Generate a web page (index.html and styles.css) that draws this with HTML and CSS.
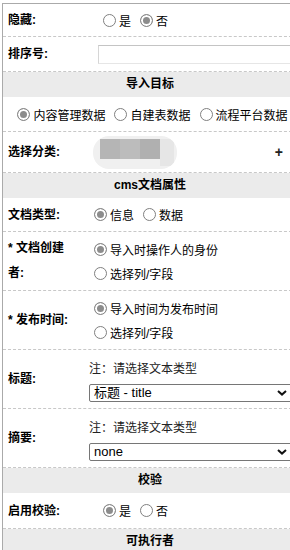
FILE: index.html
```html
<!DOCTYPE html>
<html lang="zh">
<head>
<meta charset="utf-8">
<title>表单</title>
<link rel="stylesheet" href="styles.css">
</head>
<body>
<div class="form">
  <div class="row r32">
    <div class="label">隐藏:</div>
    <div class="value indent radios">
      <label class="opt"><input class="radio" type="radio" name="hide">是</label>
      <label class="opt"><input class="radio" type="radio" name="hide" checked>否</label>
    </div>
  </div>
  <div class="row r34">
    <div class="label">排序号:</div>
    <div class="value indent"><input class="text" type="text"></div>
  </div>
  <div class="head">导入目标</div>
  <div class="row r34 center">
    <div class="radios">
      <label class="opt"><input class="radio" type="radio" name="target" checked>内容管理数据</label>
      <label class="opt"><input class="radio" type="radio" name="target">自建表数据</label>
      <label class="opt"><input class="radio" type="radio" name="target">流程平台数据</label>
    </div>
  </div>
  <div class="row r40">
    <div class="label">选择分类:</div>
    <div class="value between">
      <div class="blur"><span class="b1"></span><span class="b2"></span><span class="b3"></span><span class="b4"></span></div>
      <span class="plus">+</span>
    </div>
  </div>
  <div class="head">cms文档属性</div>
  <div class="row r33">
    <div class="label">文档类型:</div>
    <div class="value radios">
      <label class="opt"><input class="radio" type="radio" name="type" checked>信息</label>
      <label class="opt"><input class="radio" type="radio" name="type">数据</label>
    </div>
  </div>
  <div class="row r58">
    <div class="label tall">* 文档创建者:</div>
    <div class="value stack">
      <label class="opt"><input class="radio" type="radio" name="creator" checked>导入时操作人的身份</label>
      <label class="opt"><input class="radio" type="radio" name="creator">选择列/字段</label>
    </div>
  </div>
  <div class="row r58">
    <div class="label">* 发布时间:</div>
    <div class="value stack">
      <label class="opt"><input class="radio" type="radio" name="time" checked>导入时间为发布时间</label>
      <label class="opt"><input class="radio" type="radio" name="time">选择列/字段</label>
    </div>
  </div>
  <div class="row r58">
    <div class="label">标题:</div>
    <div class="value col">
      <div class="note">注：请选择文本类型</div>
      <div class="selwrap">
        <select class="sel"><option>标题 - title</option></select>
        <svg class="chev" width="10" height="6" viewBox="0 0 10 6"><path d="M1 1 L5 4.6 L9 1" fill="none" stroke="#111" stroke-width="2"/></svg>
      </div>
    </div>
  </div>
  <div class="row r58">
    <div class="label">摘要:</div>
    <div class="value col">
      <div class="note">注：请选择文本类型</div>
      <div class="selwrap">
        <select class="sel"><option>none</option></select>
        <svg class="chev" width="10" height="6" viewBox="0 0 10 6"><path d="M1 1 L5 4.6 L9 1" fill="none" stroke="#111" stroke-width="2"/></svg>
      </div>
    </div>
  </div>
  <div class="head">校验</div>
  <div class="row r35">
    <div class="label">启用校验:</div>
    <div class="value indent radios">
      <label class="opt"><input class="radio" type="radio" name="check" checked>是</label>
      <label class="opt"><input class="radio" type="radio" name="check">否</label>
    </div>
  </div>
  <div class="head">可执行者</div>
</div>
</body>
</html>
```
FILE: styles.css
```css
html, body {
  margin: 0;
  padding: 0;
  overflow: hidden;
  background: #fff;
}
body {
  font-family: "Liberation Sans", "Noto Sans CJK SC", sans-serif;
  font-size: 12px;
  color: #000;
}
.form {
  margin: 3px 0 0 2px;
  width: 294px;
  border-top: 1px solid #aaa;
  border-left: 1px solid #aaa;
}
.row {
  display: flex;
  align-items: center;
  border-bottom: 1px dashed #c8c8c8;
  box-sizing: content-box;
}
.r32 { height: 32px; }
.r33 { height: 33px; }
.r34 { height: 34px; }
.r35 { height: 35px; }
.r40 { height: 40px; }
.r58 { height: 58px; }
.center { justify-content: center; }
.label {
  width: 64px;
  padding: 0 17px 0 5px;
  flex: none;
  font-weight: bold;
  line-height: 24px;
}
.tall { line-height: 25px; }
.value {
  flex: 1;
  min-width: 0;
}
.indent { padding-left: 9px; }
.radios {
  display: flex;
  align-items: center;
}
.stack {
  display: flex;
  flex-direction: column;
}
.opt {
  display: flex;
  align-items: center;
  height: 24px;
  white-space: nowrap;
}
.radios .opt + .opt { margin-left: 4px; }
.radio {
  appearance: none;
  -webkit-appearance: none;
  box-sizing: border-box;
  width: 13px;
  height: 13px;
  margin: 0 3px 0 5px;
  border: 1px solid #808080;
  border-radius: 50%;
  background: #fff;
  flex: none;
}
.radio:checked {
  border-color: #888;
  background: #8c8c8c;
  box-shadow: inset 0 0 0 2px #fff;
}
.text {
  box-sizing: border-box;
  width: 200px;
  height: 19px;
  margin: 0;
  border: 1px solid #d6d6d6;
  border-top-color: #c4c4c4;
  border-bottom-color: #e6e6e6;
  padding: 0 3px;
  font: inherit;
}
.head {
  height: 25px;
  line-height: 25px;
  background: #ebebeb;
  text-align: center;
  font-weight: bold;
}
.between {
  display: flex;
  align-items: center;
  justify-content: space-between;
}
.blur {
  position: relative;
  margin-left: 4px;
  width: 84px;
  height: 33px;
  border-radius: 16px;
  background: #f0f0f0;
  overflow: hidden;
  filter: blur(0.4px);
}
.blur span {
  position: absolute;
  top: 3px;
  height: 20px;
  width: 20px;
}
.blur .b1 { left: 7px; background: #b5b5b5; }
.blur .b2 { left: 27px; background: #bcbcbc; }
.blur .b3 { left: 47px; background: #b0b0b0; }
.blur .b4 { left: 67px; width: 14px; background: #e6e6e6; height: 27px; }
.plus {
  margin-right: 14px;
  font-weight: bold;
  font-size: 14px;
  line-height: 14px;
  color: #222;
}
.col {
  display: flex;
  flex-direction: column;
  align-items: flex-start;
}
.note {
  line-height: 24px;
  color: #222;
}
.selwrap {
  position: relative;
  width: 206px;
  height: 18px;
  margin-top: 3px;
}
.sel {
  appearance: none;
  -webkit-appearance: none;
  display: block;
  box-sizing: border-box;
  width: 206px;
  height: 18px;
  margin: 0;
  font-family: "Liberation Sans", "Noto Sans CJK SC", sans-serif;
  font-size: 13px;
  line-height: 16px;
  color: #000;
  background: #fff;
  border: 1px solid #767676;
  border-radius: 2px;
  padding: 0 0 0 4px;
}
.chev {
  position: absolute;
  right: 8px;
  top: 6px;
  pointer-events: none;
}
```
